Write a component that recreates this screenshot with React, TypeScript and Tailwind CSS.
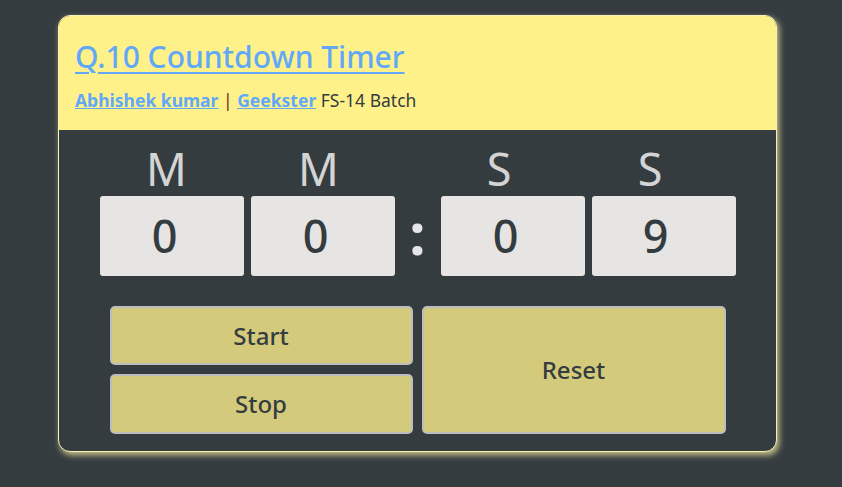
import React from "react";

export default function App() {
  const font = { fontFamily: '"Noto Sans", "Open Sans", sans-serif' };
  return (
    <div className="min-h-[487px] w-full bg-[#353c40] pt-[15px]" style={font}>
      <div className="ml-[58px] w-[719px] overflow-hidden rounded-[12px] border border-[#f7f2b8] bg-[#353c40] shadow-[2px_3px_6px_#cfc98f]">
        <div className="h-[114px] bg-[#fef18a] px-[16px] pt-[21px]">
          <a href="#" className="block text-[30px] font-medium leading-[40px] text-[#62a8f8] underline decoration-[2px] underline-offset-[4px]">
            Q.10 Countdown Timer
          </a>
          <div className="mt-[12px] text-[17.5px] leading-[22px] text-[#353c40]">
            <a href="#" className="font-bold text-[#62a8f8] underline">Abhishek kumar</a>
            <span className="text-[#6b2a1a]"> | </span>
            <a href="#" className="font-bold text-[#62a8f8] underline">Geekster</a>
            <span> FS-14 Batch</span>
          </div>
        </div>

        <div className="flex flex-col items-center pb-[17px]">
          <div className="mt-[12px] flex h-[54px] items-center text-[45px] leading-[54px] text-[#d4d4d4]">
            <div className="w-[144px] pr-[10px] text-center">M</div>
            <div className="ml-[7px] w-[144px] pr-[8px] text-center">M</div>
            <div className="w-[46px]"></div>
            <div className="w-[144px] pr-[27px] text-center">S</div>
            <div className="ml-[7px] w-[144px] pr-[27px] text-center">S</div>
          </div>
          <div className="flex h-[80px] items-stretch">
            <div className="flex w-[144px] items-center justify-center rounded-[3px] bg-[#e6e5e3] pr-[14px] text-[45px] font-medium text-[#353c40]">0</div>
            <div className="ml-[7px] flex w-[144px] items-center justify-center rounded-[3px] bg-[#e6e5e3] pr-[14px] text-[45px] font-medium text-[#353c40]">0</div>
            <div className="flex w-[46px] items-center justify-center pb-[6px] text-[58px] font-bold leading-none text-[#e6e6ea]">:</div>
            <div className="flex w-[144px] items-center justify-center rounded-[3px] bg-[#e6e5e3] pr-[14px] text-[45px] font-medium text-[#353c40]">0</div>
            <div className="ml-[7px] flex w-[144px] items-center justify-center rounded-[3px] bg-[#e6e5e3] pr-[16px] text-[45px] font-medium text-[#353c40]">9</div>
          </div>

          <div className="mt-[30px] flex w-[616px] gap-[9px]">
            <div className="flex w-[303px] flex-col gap-[9px]">
              <button className="h-[59px] rounded-[5px] border-2 border-[#bdbdbd] bg-[#d3cb7b] text-[24px] font-medium text-[#353c40]">Start</button>
              <button className="h-[60px] rounded-[5px] border-2 border-[#bdbdbd] bg-[#d3cb7b] text-[24px] font-medium text-[#353c40]">Stop</button>
            </div>
            <button className="h-[128px] flex-1 rounded-[5px] border-2 border-[#bdbdbd] bg-[#d3cb7b] text-[24px] font-medium text-[#353c40]">Reset</button>
          </div>
        </div>
      </div>
    </div>
  );
}
